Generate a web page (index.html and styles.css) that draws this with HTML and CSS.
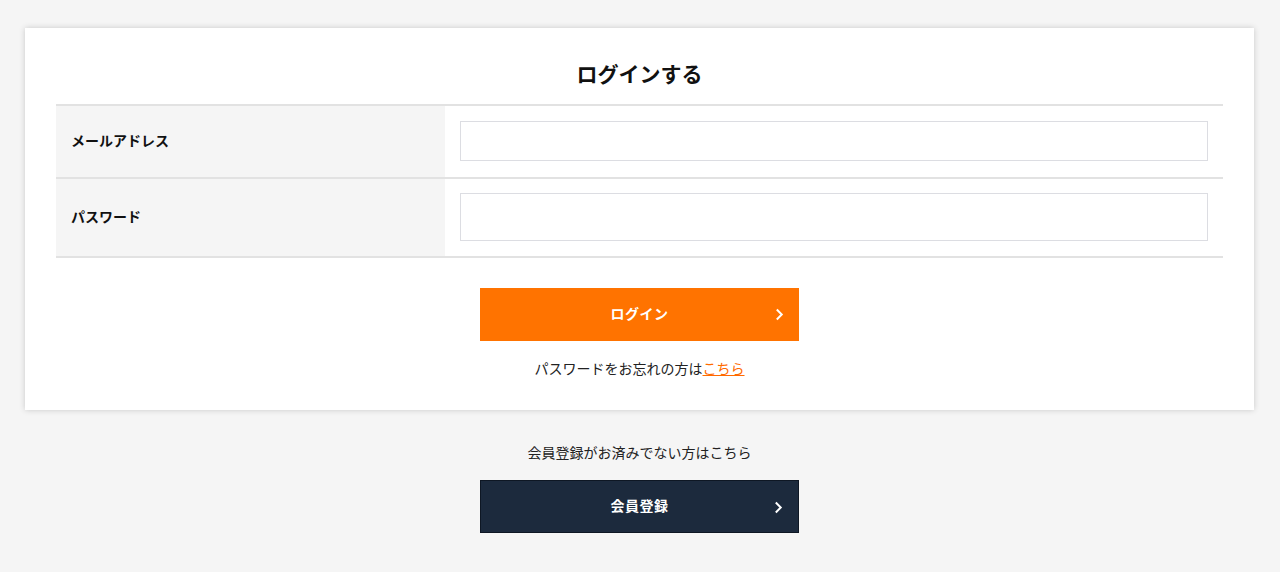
FILE: index.html
```html
<!DOCTYPE html>
<html lang="ja">
<head>
<meta charset="utf-8">
<title>ログイン</title>
<link rel="stylesheet" href="styles.css">
</head>
<body>
<main class="page">
  <section class="card">
    <h1 class="title">ログインする</h1>
    <div class="form-table">
      <div class="row row-email">
        <div class="label">メールアドレス</div>
        <div class="field"><input class="input input-email" type="email"></div>
      </div>
      <div class="row row-pass">
        <div class="label">パスワード</div>
        <div class="field"><input class="input input-pass" type="password"></div>
      </div>
    </div>
    <div class="actions">
      <button class="btn btn-orange">ログイン<svg class="chev" viewBox="0 0 10 14" width="9" height="13"><path d="M2 1.5 L7.5 7 L2 12.5" fill="none" stroke="#fff" stroke-width="2.2"/></svg></button>
      <p class="forgot">パスワードをお忘れの方は<a href="#" class="link">こちら</a></p>
    </div>
  </section>
  <section class="register">
    <p class="register-text">会員登録がお済みでない方はこちら</p>
    <button class="btn btn-navy">会員登録<svg class="chev" viewBox="0 0 10 14" width="9" height="13"><path d="M2 1.5 L7.5 7 L2 12.5" fill="none" stroke="#fff" stroke-width="2.2"/></svg></button>
  </section>
</main>
</body>
</html>
```
FILE: styles.css
```css
* { box-sizing: border-box; }
html, body { margin: 0; padding: 0; }
body {
  background: #f5f5f5;
  font-family: "Noto Sans CJK JP", "Noto Sans", sans-serif;
  color: #222;
}
.page {
  padding: 28px 26px 0 25px;
}
.card {
  background: #fff;
  box-shadow: 0 0 6px rgba(0,0,0,0.18);
  padding: 0 31px 0 31px;
  height: 382px;
}
.title {
  margin: 0;
  padding-top: 31px;
  height: 76px;
  font-size: 21px;
  font-weight: 700;
  line-height: 28px;
  text-align: center;
  color: #111;
}
.form-table {
  border-top: 2px solid #e2e2e2;
}
.row {
  display: flex;
  border-bottom: 2px solid #e2e2e2;
}
.row-email { height: 73px; }
.row-pass { height: 79px; }
.label {
  width: 389px;
  background: #f5f5f5;
  display: flex;
  align-items: center;
  padding-left: 15px;
  padding-bottom: 4px;
  font-size: 14px;
  font-weight: 700;
  color: #111;
}
.field {
  flex: 1;
  display: flex;
  align-items: center;
  padding: 0 15px;
}
.input {
  width: 100%;
  border: 1px solid #dcdde2;
  background: #fff;
  margin: 0;
  outline: none;
}
.input-email { height: 40px; margin-top: -2px; }
.input-pass { height: 48px; margin-top: -1px; }
.actions {
  display: flex;
  flex-direction: column;
  align-items: center;
  padding-top: 30px;
}
.btn {
  position: relative;
  width: 319px;
  height: 53px;
  border: none;
  color: #fff;
  font-family: inherit;
  font-size: 14px;
  font-weight: 700;
  letter-spacing: 0.5px;
  cursor: pointer;
  padding: 0 0 3px;
}
.btn .chev {
  position: absolute;
  right: 15px;
  top: 20px;
}
.btn-orange { background: #ff7300; }
.btn-navy {
  background: #1c2a3d;
  border: 1px solid #0e1724;
}
.forgot {
  margin: 17px 0 0;
  font-size: 14px;
  line-height: 20px;
  color: #222;
}
.link {
  color: #ff6a00;
  text-decoration: underline;
}
.register {
  display: flex;
  flex-direction: column;
  align-items: center;
  padding-top: 31px;
}
.register-text {
  margin: 0 0 17px;
  font-size: 14px;
  line-height: 22px;
  color: #222;
}
```
